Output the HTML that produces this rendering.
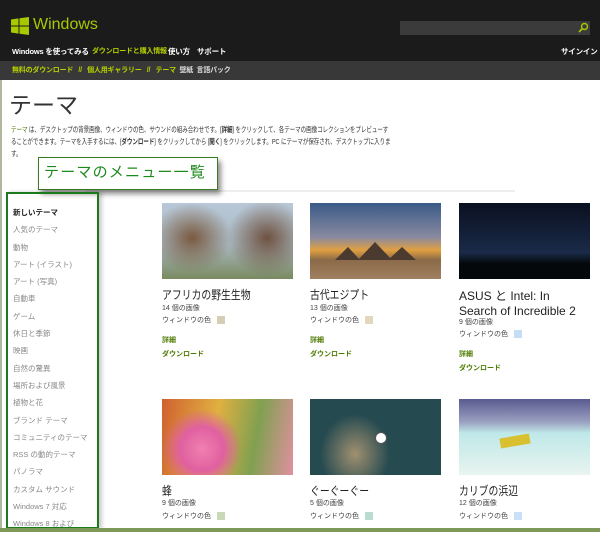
<!DOCTYPE html>
<html><head><meta charset="utf-8"><style>
*{margin:0;padding:0;box-sizing:border-box}
body{width:600px;height:532px;overflow:hidden;background:#fff;font-family:"Liberation Sans","Noto Sans CJK JP",sans-serif;position:relative}
.a{position:absolute;white-space:nowrap;line-height:1}
.hd{position:absolute;left:0;top:0;width:600px;height:61px;background:#1b1b1b}
.sub{position:absolute;left:0;top:61px;width:600px;height:19px;background:#383838}
.n{font-size:7.5px;font-weight:bold;color:#fff;letter-spacing:-0.2px}
.l{color:#b6d000}
.sb{font-size:7.5px;color:#888}
.img{position:absolute;width:131px;height:76px}
.t{font-size:12px;color:#222}
.tj{transform:scaleX(.82);transform-origin:0 0}
.s{font-size:7px;color:#444}
.g{font-size:7px;color:#4d7a00;font-weight:bold}
.sw{display:inline-block;width:8px;height:8px;vertical-align:middle;margin-left:6px}
</style></head><body>
<div class="hd"></div>
<div class="sub"></div>
<svg class="a" style="left:11px;top:17px" width="18" height="18" viewBox="0 0 18 18"><path d="M0 2.5L7.5 1.4V8.5H0ZM8.5 1.2L18 0V8.5H8.5ZM0 9.5H7.5V16.6L0 15.5ZM8.5 9.5H18V18L8.5 16.8Z" fill="#a8c800"/></svg>
<div class="a" style="left:33px;top:17px;font-size:16px;color:#a8c800">Windows</div>
<div class="a" style="left:400px;top:21px;width:190px;height:14px;background:#3b3b3b"></div>
<svg class="a" style="left:578px;top:22px" width="11" height="11" viewBox="0 0 11 11"><circle cx="6.5" cy="4.5" r="3" fill="none" stroke="#a8c800" stroke-width="1.4"/><path d="M4.5 6.5L1 10" stroke="#a8c800" stroke-width="1.6"/></svg>
<div class="a n" style="left:12px;top:48px">Windows を使ってみる</div>
<div class="a n l" style="left:92px;top:48px;font-size:7px">ダウンロードと購入情報</div>
<div class="a n" style="left:168px;top:48px">使い方</div>
<div class="a n" style="left:197px;top:48px">サポート</div>
<div class="a n" style="left:561px;top:48px">サインイン</div>
<div class="a n l" style="left:12px;top:67px;font-size:7px">無料のダウンロード &nbsp; // &nbsp; 個人用ギャラリー &nbsp; // &nbsp; <span>テーマ</span> &nbsp;<span style="color:#ddd">壁紙 &nbsp;言語パック</span></div>
<div class="a" style="left:9px;top:94px;font-size:23px;color:#333">テーマ</div>
<div class="a" style="left:11px;top:124px;font-size:7.5px;color:#333;line-height:12px;letter-spacing:-0.1px;transform:scaleX(.74);transform-origin:0 0"><span style="color:#4d7a00">テーマ</span> は、デスクトップの背景画像、ウィンドウの色、サウンドの組み合わせです。[<b>詳細</b>] をクリックして、各テーマの画像コレクションをプレビューす<br>ることができます。テーマを入手するには、[<b>ダウンロード</b>] をクリックしてから [<b>開く</b>] をクリックします。PC にテーマが保存され、デスクトップに入りま<br>す。</div>
<div class="a" style="left:85px;top:190px;width:430px;height:2px;background:#eee"></div>
<div class="a" style="left:38px;top:157px;width:180px;height:33px;border:1px solid #3a7a20;background:#fff;box-shadow:3px 4px 5px rgba(0,0,0,.45)"></div>
<div class="a" style="left:44px;top:165px;font-size:15px;letter-spacing:1.2px;color:#1e8a1e">テーマのメニュー一覧</div>
<div class="a" style="left:6px;top:192px;width:93px;height:337px;border:2px solid #1c7a1c;box-shadow:3px 0 4px rgba(0,0,0,.2)"></div>
<div class="a sb" style="left:13px;top:204px;line-height:17.3px">
<div style="color:#222;font-weight:bold">新しいテーマ</div><div>人気のテーマ</div><div>動物</div><div>アート (イラスト)</div><div>アート (写真)</div><div>自動車</div><div>ゲーム</div><div>休日と季節</div><div>映画</div><div>自然の驚異</div><div>場所および風景</div><div>植物と花</div><div>ブランド テーマ</div><div>コミュニティのテーマ</div><div>RSS の動的テーマ</div><div>パノラマ</div><div>カスタム サウンド</div><div>Windows 7 対応</div><div>Windows 8 および</div></div>

<div class="img" style="left:162px;top:203px;background:linear-gradient(#b8c8d8,#a8b8c0 55%,#7a8a60);"></div>
<div class="img" style="left:162px;top:203px;background:radial-gradient(ellipse 40px 35px at 30px 35px,#7a5a40,transparent),radial-gradient(ellipse 40px 38px at 105px 35px,#6f5240,transparent);"></div>
<div class="img" style="left:310px;top:203px;background:linear-gradient(#3a5a88,#8a8aa0 45%,#e0a040 62%,#8a6a48 75%,#a08060)"></div>
<svg class="a" style="left:310px;top:240px" width="131" height="30"><path d="M25 20L38 7L50 20ZM48 20L65 2L82 20ZM78 20L92 7L106 20Z" fill="#4a3a30"/></svg>
<div class="img" style="left:459px;top:203px;background:linear-gradient(#0a1020,#1a2a48 65%,#05080a 80%)"></div>
<div class="img" style="left:162px;top:399px;background:radial-gradient(circle at 40px 50px,#f080b0 0,#e060a0 22px,transparent 40px),linear-gradient(100deg,#d06030,#e0b040 40%,#80a050 70%,#e090a0)"></div>
<div class="img" style="left:310px;top:399px;background:radial-gradient(ellipse 35px 40px at 45px 55px,#a09070,transparent),#254a50"></div>
<div class="a" style="left:375px;top:432px;width:12px;height:12px;border-radius:50%;background:#fff;border:1px solid #555"></div>
<div class="img" style="left:459px;top:399px;background:linear-gradient(#5a5a90,#9aa0c0 30%,#bfe8e8 45%,#e8f4f0)"></div>
<div class="a" style="left:500px;top:436px;width:30px;height:10px;background:#d8c030;transform:rotate(-10deg)"></div>

<div class="a t tj" style="left:162px;top:289px">アフリカの野生生物</div>
<div class="a s" style="left:162px;top:305px">14 個の画像</div>
<div class="a s" style="left:162px;top:316px">ウィンドウの色<span class="sw" style="background:#d6cdb5"></span></div>
<div class="a g" style="left:162px;top:337px">詳細</div>
<div class="a g" style="left:162px;top:351px">ダウンロード</div>

<div class="a t tj" style="left:310px;top:289px">古代エジプト</div>
<div class="a s" style="left:310px;top:305px">13 個の画像</div>
<div class="a s" style="left:310px;top:316px">ウィンドウの色<span class="sw" style="background:#e3d7bb"></span></div>
<div class="a g" style="left:310px;top:337px">詳細</div>
<div class="a g" style="left:310px;top:351px">ダウンロード</div>

<div class="a t" style="left:459px;top:289px;line-height:14.5px">ASUS と Intel: In<br>Search of Incredible 2</div>
<div class="a s" style="left:459px;top:319px">9 個の画像</div>
<div class="a s" style="left:459px;top:330px">ウィンドウの色<span class="sw" style="background:#c5def8"></span></div>
<div class="a g" style="left:459px;top:351px">詳細</div>
<div class="a g" style="left:459px;top:365px">ダウンロード</div>

<div class="a t tj" style="left:162px;top:485px">蜂</div>
<div class="a s" style="left:162px;top:500px">9 個の画像</div>
<div class="a s" style="left:162px;top:512px">ウィンドウの色<span class="sw" style="background:#c8d8b8"></span></div>
<div class="a t tj" style="left:310px;top:485px">ぐーぐーぐー</div>
<div class="a s" style="left:310px;top:500px">5 個の画像</div>
<div class="a s" style="left:310px;top:512px">ウィンドウの色<span class="sw" style="background:#b8dcd0"></span></div>
<div class="a t tj" style="left:459px;top:485px">カリブの浜辺</div>
<div class="a s" style="left:459px;top:500px">12 個の画像</div>
<div class="a s" style="left:459px;top:512px">ウィンドウの色<span class="sw" style="background:#c8e0f8"></span></div>
<div class="a" style="left:0;top:528px;width:600px;height:4px;background:#7f9a58"></div>
<div class="a" style="left:0;top:80px;width:2px;height:448px;background:#b0b8a0"></div>
</body></html>
